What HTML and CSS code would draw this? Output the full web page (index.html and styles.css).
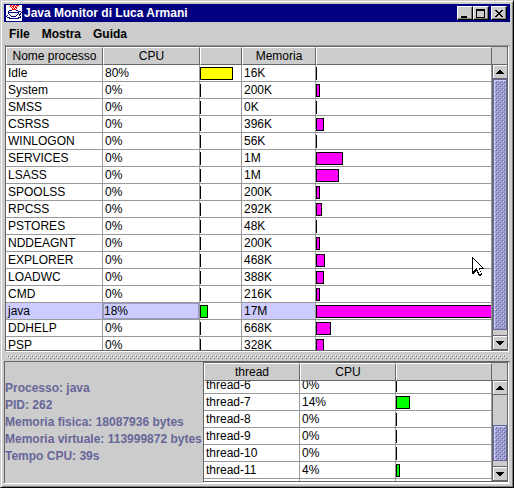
FILE: index.html
```
<!DOCTYPE html>
<html lang="it">

<head>
    <meta charset="UTF-8">
    <title>Java Monitor di Luca Armani</title>
    <meta name="viewport" content="width=device-width, initial-scale=1.0">
    <link rel="stylesheet" href="styles.css">
</head>

<body>
    <div class="window">
        <header class="title-bar">
            <svg class="logo" width="16" height="16" viewBox="0 0 16 16" shape-rendering="crispEdges">
                <rect width="16" height="16" fill="#fff"/>
                <path d="M4 0h2v1h-2zM7 0h2v1h-2zM10 0h3v1h-3zM4 1h1v1h-1zM6 1h2v1h-2zM9 1h1v1h-1zM11 1h1v1h-1zM5 2h1v1h-1zM7 2h1v1h-1zM9 2h2v1h-2zM6 3h1v1h-1zM8 3h1v1h-1zM10 3h1v1h-1zM6 4h4v1h-4z" fill="#f00"/>
                <path d="M3 5h3v1h-3zM10 5h2v1h-2zM2 6h1v3h-1zM12 6h3v1h-3zM12 7h1v2h-1zM15 7h1v1h-1zM3 7h9v1h-9zM13 9h2v1h-2zM14 8h1v1h-1zM3 9h1v1h-1zM11 9h1v1h-1zM1 10h1v1h-1zM4 10h1v1h-1zM10 10h1v1h-1zM13 10h1v1h-1zM0 11h1v1h-1zM5 11h5v1h-5zM14 11h1v1h-1zM1 12h3v1h-3zM12 12h3v1h-3zM3 13h10v1h-10z" fill="#000080"/>
            </svg>
            <h1>Java Monitor di Luca Armani</h1>
            <div class="window-buttons">
                <button type="button" aria-label="Minimize"><svg width="13" height="11" shape-rendering="crispEdges"><path d="M3 8h6v2H3z"/></svg></button>
                <button type="button" aria-label="Maximize"><svg width="13" height="11" shape-rendering="crispEdges"><path d="M2 1h9v9H2zM3 3v6h7V3z" fill-rule="evenodd"/></svg></button>
                <button type="button" class="close" aria-label="Close"><svg width="13" height="11" shape-rendering="crispEdges"><path d="M3 2h2v1h1v1h2V3h1V2h2v1h-1v1H9v1H8v1h1v1h1v1h1v1H9V8H8V7H6v1H5v1H3V8h1V7h1V6h1V5H5V4H4V3H3z"/></svg></button>
            </div>
        </header>

        <nav class="menu-bar">
            <button type="button">File</button>
            <button type="button">Mostra</button>
            <button type="button">Guida</button>
        </nav>

        <main class="split">
            <section class="pane processes">
                <div class="viewport">
                    <table>
                        <colgroup>
                            <col class="col-name">
                            <col class="col-name">
                            <col class="col-bar">
                            <col class="col-mem">
                            <col>
                        </colgroup>
                        <thead>
                            <tr><th>Nome processo</th><th>CPU</th><th></th><th>Memoria</th><th></th></tr>
                        </thead>
                        <tbody>
                            <tr><td>Idle</td><td>80%</td><td class="chart"><div class="bar yellow" style="width: 33px"></div></td><td>16K</td><td class="chart"><div class="bar empty"></div></td></tr>
                            <tr><td>System</td><td>0%</td><td class="chart"><div class="bar empty"></div></td><td>200K</td><td class="chart"><div class="bar magenta" style="width: 4px"></div></td></tr>
                            <tr><td>SMSS</td><td>0%</td><td class="chart"><div class="bar empty"></div></td><td>0K</td><td class="chart"><div class="bar empty"></div></td></tr>
                            <tr><td>CSRSS</td><td>0%</td><td class="chart"><div class="bar empty"></div></td><td>396K</td><td class="chart"><div class="bar magenta" style="width: 8px"></div></td></tr>
                            <tr><td>WINLOGON</td><td>0%</td><td class="chart"><div class="bar empty"></div></td><td>56K</td><td class="chart"><div class="bar empty"></div></td></tr>
                            <tr><td>SERVICES</td><td>0%</td><td class="chart"><div class="bar empty"></div></td><td>1M</td><td class="chart"><div class="bar magenta" style="width: 27px"></div></td></tr>
                            <tr><td>LSASS</td><td>0%</td><td class="chart"><div class="bar empty"></div></td><td>1M</td><td class="chart"><div class="bar magenta" style="width: 23px"></div></td></tr>
                            <tr><td>SPOOLSS</td><td>0%</td><td class="chart"><div class="bar empty"></div></td><td>200K</td><td class="chart"><div class="bar magenta" style="width: 4px"></div></td></tr>
                            <tr><td>RPCSS</td><td>0%</td><td class="chart"><div class="bar empty"></div></td><td>292K</td><td class="chart"><div class="bar magenta" style="width: 6px"></div></td></tr>
                            <tr><td>PSTORES</td><td>0%</td><td class="chart"><div class="bar empty"></div></td><td>48K</td><td class="chart"><div class="bar empty"></div></td></tr>
                            <tr><td>NDDEAGNT</td><td>0%</td><td class="chart"><div class="bar empty"></div></td><td>200K</td><td class="chart"><div class="bar magenta" style="width: 4px"></div></td></tr>
                            <tr><td>EXPLORER</td><td>0%</td><td class="chart"><div class="bar empty"></div></td><td>468K</td><td class="chart"><div class="bar magenta" style="width: 9px"></div></td></tr>
                            <tr><td>LOADWC</td><td>0%</td><td class="chart"><div class="bar empty"></div></td><td>388K</td><td class="chart"><div class="bar magenta" style="width: 8px"></div></td></tr>
                            <tr><td>CMD</td><td>0%</td><td class="chart"><div class="bar empty"></div></td><td>216K</td><td class="chart"><div class="bar magenta" style="width: 4px"></div></td></tr>
                            <tr class="selected"><td>java</td><td class="focus">18%</td><td class="chart"><div class="bar green" style="width: 8px"></div></td><td>17M</td><td class="chart"><div class="bar magenta" style="width: 360px"></div></td></tr>
                            <tr><td>DDHELP</td><td>0%</td><td class="chart"><div class="bar empty"></div></td><td>668K</td><td class="chart"><div class="bar magenta" style="width: 15px"></div></td></tr>
                            <tr><td>PSP</td><td>0%</td><td class="chart"><div class="bar empty"></div></td><td>328K</td><td class="chart"><div class="bar magenta" style="width: 8px"></div></td></tr>
                        </tbody>
                    </table>
                </div>
                <div class="scrollbar">
                    <button type="button" aria-label="Scroll up"><svg width="8" height="4" shape-rendering="crispEdges"><path d="M3 0h2v1h1v1h1v1h1v1H0V3h1V2h1V1h1z"/></svg></button>
                    <div class="track"><div class="thumb" style="height: 98%"></div></div>
                    <button type="button" aria-label="Scroll down"><svg width="8" height="4" shape-rendering="crispEdges"><path d="M0 0h8v1H7v1H6v1H5v1H3V3H2V2H1V1H0z"/></svg></button>
                </div>
            </section>

            <div class="divider"></div>

            <section class="details">
                <div class="info">
                    <p>Processo: java</p>
                    <p>PID: 262</p>
                    <p>Memoria fisica: 18087936 bytes</p>
                    <p>Memoria virtuale: 113999872 bytes</p>
                    <p>Tempo CPU: 39s</p>
                </div>
                <div class="pane threads">
                    <div class="viewport" id="threads">
                        <table>
                            <thead>
                                <tr><th>thread</th><th>CPU</th><th></th></tr>
                            </thead>
                            <tbody>
                                <tr><td>thread-6</td><td>0%</td><td class="chart"><div class="bar empty"></div></td></tr>
                                <tr><td>thread-7</td><td>14%</td><td class="chart"><div class="bar green" style="width: 14px"></div></td></tr>
                                <tr><td>thread-8</td><td>0%</td><td class="chart"><div class="bar empty"></div></td></tr>
                                <tr><td>thread-9</td><td>0%</td><td class="chart"><div class="bar empty"></div></td></tr>
                                <tr><td>thread-10</td><td>0%</td><td class="chart"><div class="bar empty"></div></td></tr>
                                <tr><td>thread-11</td><td>4%</td><td class="chart"><div class="bar green" style="width: 4px"></div></td></tr>
                                <tr><td></td><td></td><td class="chart"><div class="bar empty"></div></td></tr>
                            </tbody>
                        </table>
                    </div>
                    <div class="scrollbar">
                        <button type="button" aria-label="Scroll up"><svg width="8" height="4" shape-rendering="crispEdges"><path d="M3 0h2v1h1v1h1v1h1v1H0V3h1V2h1V1h1z"/></svg></button>
                        <div class="track"><div class="thumb" style="height: 51%; margin-top: 30px"></div></div>
                        <button type="button" aria-label="Scroll down"><svg width="8" height="4" shape-rendering="crispEdges"><path d="M0 0h8v1H7v1H6v1H5v1H3V3H2V2H1V1H0z"/></svg></button>
                    </div>
                </div>
            </section>
        </main>

        <svg class="pointer" width="12" height="20" viewBox="0 0 12 20" shape-rendering="crispEdges">
            <path d="M0 0h1v1h1v1h1v1h1v1h1v1h1v1h1v1h1v1h1v1h1v1h1v1h1v1H8v2h1v2h1v2H9v1H7v-1H6v-2H5v-2H4v1H3v1H2v1H0z"/>
            <path d="M1 2h1v1h1v1h1v1h1v1h1v1h1v1h1v1h1v1h1v1H7v2h1v2h1v2H7v-2H6v-2H5v-2H4v1H3v1H2v1H1z" fill="#fff"/>
        </svg>
    </div>
    <script>
        document.getElementById('threads').scrollTop = 4;
    </script>
</body>

</html>
```
FILE: styles.css
```
* {
    box-sizing: border-box;
}

body {
    margin: 0;
    font-family: "Liberation Sans", Arial, sans-serif;
    font-size: 12px;
    color: #000;
    background: #ccc;
}

h1,
p {
    margin: 0;
}

button {
    font: inherit;
    color: inherit;
    padding: 0;
    border: none;
    background: #ccc;
}

svg {
    display: block;
}

.window {
    display: flex;
    flex-direction: column;
    height: 100vh;
    padding: 2px;
    border: 1px solid;
    border-color: #ccc #000 #000 #ccc;
    box-shadow: inset 1px 1px #fff, inset -1px -1px #808080;
}

.title-bar {
    display: flex;
    align-items: center;
    height: 18px;
    margin: 1px 1px 0;
    padding: 0 3px 0 2px;
    background: #000080;
    color: #fff;
}

.title-bar h1 {
    flex: 1;
    padding-left: 2px;
    font-size: 12px;
    line-height: 18px;
}

.window-buttons {
    display: flex;
}

.window-buttons button {
    width: 16px;
    height: 14px;
    border: 1px solid;
    border-color: #fff #000 #000 #fff;
    box-shadow: inset -1px -1px #808080;
}

.window-buttons .close {
    margin-left: 2px;
}

.menu-bar {
    display: flex;
    gap: 12px;
    height: 23px;
    padding: 1px 6px 0;
}

.menu-bar button {
    font-weight: bold;
    line-height: 22px;
}

.split {
    display: flex;
    flex-direction: column;
    flex: 1;
    min-height: 0;
    margin: 0 1px 1px;
    border-top: 1px solid #999;
}

.pane {
    display: flex;
    border: 1px solid #666;
    box-shadow: 1px 1px #fff;
    min-height: 0;
}

.processes {
    flex: 1;
    margin: 0 2px 2px 1px;
}

.viewport {
    flex: 1;
    min-width: 0;
    overflow: hidden;
    background: #fff;
}

table {
    width: 100%;
    table-layout: fixed;
    border-collapse: separate;
    border-spacing: 0;
}

.col-name {
    width: 97px;
}

.col-bar {
    width: 42px;
}

.col-mem {
    width: 74px;
}

th {
    position: sticky;
    top: 0;
    height: 18px;
    padding: 0;
    font-weight: normal;
    line-height: 16px;
    background: #ccc;
    border: 1px solid;
    border-color: #fff #666 #666 #fff;
    white-space: nowrap;
}

td {
    height: 17px;
    padding: 0 2px;
    line-height: 16px;
    border-right: 1px solid #999;
    border-bottom: 1px solid #999;
    white-space: nowrap;
}

td.chart {
    padding: 0;
    overflow: hidden;
}

.bar {
    height: 13px;
    margin-top: 1px;
    border: 1px solid #000;
}

.bar.empty {
    width: 1px;
    border-right: none;
}

.yellow {
    background: #ff0;
}

.green {
    background: #0f0;
}

.magenta {
    background: #f0f;
}

.selected td {
    background: #ccf;
}

.selected .chart {
    background: #fff;
}

.selected .focus {
    padding: 0 1px;
    box-shadow: inset 0 0 0 1px #99c;
}

.scrollbar {
    display: flex;
    flex-direction: column;
    width: 15px;
    padding-top: 17px;
    background: #ccc;
}

.scrollbar button {
    display: flex;
    align-items: center;
    justify-content: center;
    height: 15px;
    border: 1px solid #666;
    border-right: none;
    box-shadow: inset 1px 1px #fff;
}

.track {
    flex: 1;
    min-height: 0;
    border-left: 1px solid #666;
}

.thumb {
    border: 1px solid #669;
    box-shadow: inset 1px 1px #ccf;
    background:
        conic-gradient(at 1px 1px, transparent 75%, #ccf 0) 1px 1px / 4px 4px,
        conic-gradient(at 1px 1px, transparent 75%, #669 0) 2px 2px / 4px 4px,
        conic-gradient(at 1px 1px, transparent 75%, #ccf 0) 3px 3px / 4px 4px,
        conic-gradient(at 1px 1px, transparent 75%, #669 0) 4px 4px / 4px 4px,
        #99c;
}

.divider {
    height: 4px;
    margin: 2px 3px;
    background:
        conic-gradient(at 1px 1px, transparent 75%, #fff 0) 0 0 / 4px 4px,
        conic-gradient(at 1px 1px, transparent 75%, #666 0) 1px 1px / 4px 4px,
        conic-gradient(at 1px 1px, transparent 75%, #fff 0) 2px 2px / 4px 4px,
        conic-gradient(at 1px 1px, transparent 75%, #666 0) 3px 3px / 4px 4px;
}

.details {
    display: flex;
    height: 123px;
    border: 1px solid #666;
    border-right: none;
    border-left: none;
    border-bottom-color: #fff;
}

.info {
    display: flex;
    flex-direction: column;
    justify-content: center;
    width: 199px;
    border-left: 1px solid #666;
    color: #669;
    font-weight: bold;
    line-height: 17px;
    white-space: nowrap;
}

.threads {
    flex: 1;
    min-width: 0;
    margin: 0 2px 1px 0;
}

.pointer {
    position: absolute;
    left: 472px;
    top: 257px;
}
```
